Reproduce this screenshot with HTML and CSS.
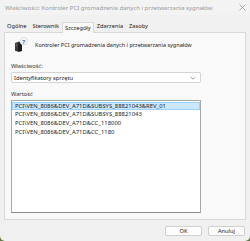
FILE: index.html
```html
<!DOCTYPE html>
<html lang="pl">

<head>
    <meta charset="UTF-8">
    <meta name="viewport" content="width=device-width, initial-scale=1.0">
    <title>Właściwości</title>
    <link rel="stylesheet" href="styles.css">
</head>

<body>

    <div class="window">
        <div class="titlebar">
            <span class="title">Właściwości: Kontroler PCI gromadzenia danych i przetwarzania sygnałów</span>
            <svg class="close" width="7" height="7" viewBox="0 0 7 7">
                <path d="M0.5 0.5 L6.5 6.5 M6.5 0.5 L0.5 6.5" stroke="#9a9a9a" stroke-width="0.8" />
            </svg>
        </div>

        <div class="tabs">
            <div class="tab">Ogólne</div>
            <div class="tab">Sterownik</div>
            <div class="tab active">Szczegóły</div>
            <div class="tab">Zdarzenia</div>
            <div class="tab">Zasoby</div>
        </div>

        <div class="panel">
            <div class="device">
                <svg class="icon" width="15" height="15" viewBox="0 0 15 15">
                    <path d="M2 6 L6 4.5 L9 5.5 L9 14 L5 14.8 L2 13.8 Z" fill="#3a3a3a" />
                    <path d="M5 7 L9 5.5 L9 14 L5 14.8 Z" fill="#1c1c1c" />
                    <path d="M2.8 7.2 L4.4 7.8 M2.8 8.6 L4.4 9.2" stroke="#8a8a8a" stroke-width="0.5" />
                    <circle cx="10.8" cy="4.2" r="3.8" fill="#f4f6f8" stroke="#c8ccd2" stroke-width="0.5" />
                    <text x="10.8" y="6.6" text-anchor="middle" class="qmark">?</text>
                </svg>
                <span class="device-name">Kontroler PCI gromadzenia danych i przetwarzania sygnałów</span>
            </div>

            <div class="label first">Właściwość:</div>
            <div class="combo">
                <span>Identyfikatory sprzętu</span>
                <svg width="6" height="4" viewBox="0 0 6 4">
                    <path d="M0.5 0.8 L3 3.2 L5.5 0.8" fill="none" stroke="#777" stroke-width="0.7" />
                </svg>
            </div>

            <div class="label second">Wartość</div>
            <div class="list">
                <div class="item selected">PCI\VEN_8086&amp;DEV_A71D&amp;SUBSYS_88821043&amp;REV_01</div>
                <div class="item">PCI\VEN_8086&amp;DEV_A71D&amp;SUBSYS_88821043</div>
                <div class="item">PCI\VEN_8086&amp;DEV_A71D&amp;CC_118000</div>
                <div class="item">PCI\VEN_8086&amp;DEV_A71D&amp;CC_1180</div>
            </div>
        </div>

        <div class="buttons">
            <button class="btn">OK</button>
            <button class="btn">Anuluj</button>
        </div>
    </div>

</body>

</html>
```

FILE: styles.css
```css
* {
    margin: 0;
    padding: 0;
    box-sizing: border-box;
}

body {
    width: 250px;
    height: 241px;
    overflow: hidden;
    background-color: #5d7a45;
    font-family: "Noto Sans", "Open Sans", sans-serif;
    font-size: 5.7px;
    color: #1b1b1b;
}

.window {
    width: 250px;
    height: 241px;
    background-color: #f0f0f0;
    border-radius: 0 0 5px 5px;
    display: flex;
    flex-direction: column;
}

.titlebar {
    height: 15px;
    padding: 0 4px 0 5px;
    display: flex;
    justify-content: space-between;
    align-items: center;
    color: #9a9a9a;
    font-size: 6px;
    white-space: nowrap;
    background-color: #f3f3f3;
}

.tabs {
    display: flex;
    padding-left: 4px;
    margin-top: 6px;
    height: 11px;
}

.tab {
    padding: 0 3px;
    line-height: 11px;
    white-space: nowrap;
}

.tab.active {
    background-color: #f9f9f9;
    border: 1px solid #d9d9d9;
    border-bottom: none;
    padding: 0 2px;
    line-height: 10px;
    position: relative;
    top: 1px;
    height: 11px;
}

.panel {
    margin: 0 4px;
    height: 188px;
    background-color: #f9f9f9;
    border: 1px solid #d9d9d9;
    padding: 4px 6px 0 6px;
    display: flex;
    flex-direction: column;
}

.device {
    display: flex;
    align-items: center;
    gap: 7px;
    height: 15px;
    padding-left: 2px;
}

.device-name {
    font-size: 5.5px;
    white-space: nowrap;
}

.qmark {
    font-family: "Noto Sans", sans-serif;
    font-size: 6px;
    font-weight: bold;
    fill: #2d6fc4;
}

.label {
    height: 8px;
    line-height: 8px;
    color: #333;
}

.label.first {
    margin-top: 10px;
}

.label.second {
    margin-top: 7px;
}

.combo {
    margin-top: 2px;
    width: 190px;
    height: 11px;
    background-color: #fff;
    border: 1px solid #d4d4d4;
    border-radius: 2px;
    display: flex;
    justify-content: space-between;
    align-items: center;
    padding: 0 4px 0 2px;
}

.list {
    margin-top: 2px;
    width: 190px;
    height: 113px;
    background-color: #fff;
    border: 1px solid #a8a8a8;
    border-bottom-color: #8a8a8a;
    font-size: 5.9px;
}

.item {
    height: 8.75px;
    line-height: 8.75px;
    padding-left: 3px;
    white-space: nowrap;
}

.item.selected {
    background-color: #cce8ff;
    border: 1px solid #99d1ff;
    line-height: 7px;
    padding-left: 2px;
    margin-top: 0.5px;
}

.buttons {
    display: flex;
    justify-content: flex-end;
    gap: 6px;
    padding-right: 5px;
    margin-top: 6px;
}

.btn {
    width: 37px;
    height: 10px;
    font-family: inherit;
    font-size: 5.7px;
    color: #1b1b1b;
    background-color: #fdfdfd;
    border: 1px solid #d0d0d0;
    border-radius: 2px;
    line-height: 8px;
}
```
